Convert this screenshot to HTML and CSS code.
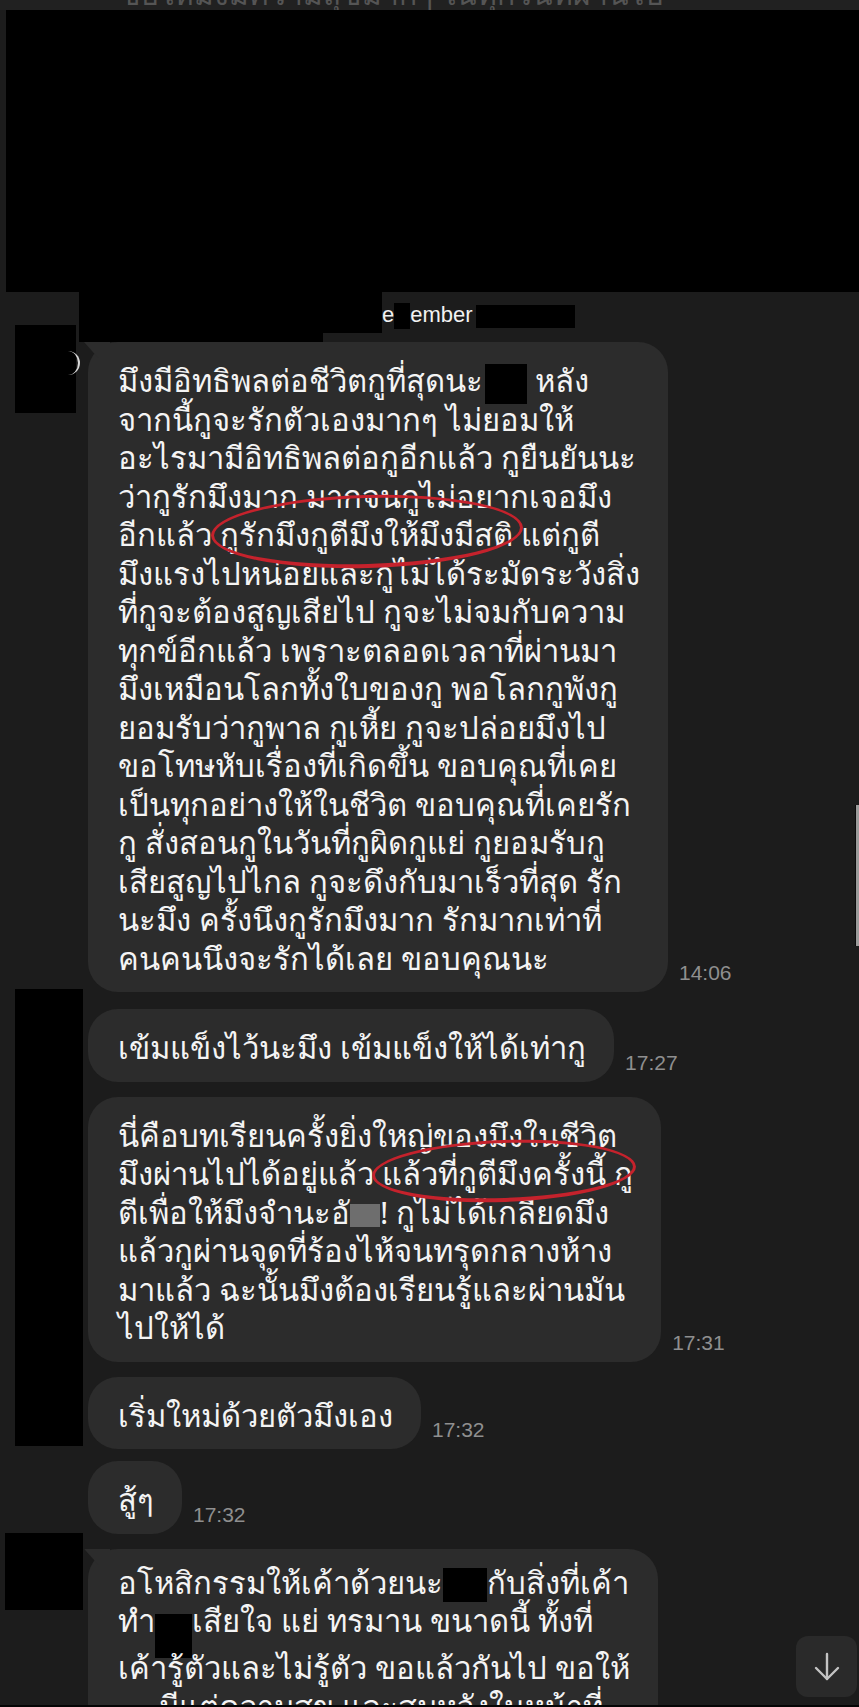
FILE: index.html
```html
<!DOCTYPE html>
<html lang="th">
<head>
    <meta charset="UTF-8">
    <meta name="viewport" content="width=device-width, initial-scale=1.0">
    <title>Chat</title>
    <link rel="stylesheet" href="styles.css">
</head>
<body>
    <div class="screen">
        <div class="prev-line"><span>ขอให้มึงมีความสุขมากๆ ในทุกวันที่ผ่านไป</span></div>
        <div class="top-cover"></div>

        <div class="date-row">
            <div class="blk blk-a"></div>
            <div class="blk blk-b"></div>
            <div class="date-text">
                <span class="hide">D</span>e<span class="hide hide-c">c</span>ember
            </div>
            <div class="blk blk-d"></div>
        </div>

        <div class="chat">
            <!-- avatar / name redactions -->
            <div class="blk avatar-1"><span class="ring"></span></div>
            <div class="blk avatar-col"></div>
            <div class="blk avatar-6"></div>

            <div class="msg row-1">
                <div class="bubble tail">มึงมีอิทธิพลต่อชีวิตกูที่สุดนะ<span class="hide-box box-1"></span> หลัง<br>จากนี้กูจะรักตัวเองมากๆ ไม่ยอมให้<br>อะไรมามีอิทธิพลต่อกูอีกแล้ว กูยืนยันนะ<br>ว่ากูรักมึงมาก มากจนกูไม่อยากเจอมึง<br>อีกแล้ว <span class="circled c1">กูรักมึงกูตีมึงให้มึงมีสติ</span> แต่กูตี<br>มึงแรงไปหน่อยและกูไม่ได้ระมัดระวังสิ่ง<br>ที่กูจะต้องสูญเสียไป กูจะไม่จมกับความ<br>ทุกข์อีกแล้ว เพราะตลอดเวลาที่ผ่านมา<br>มึงเหมือนโลกทั้งใบของกู พอโลกกูพังกู<br>ยอมรับว่ากูพาล กูเหี้ย กูจะปล่อยมึงไป<br>ขอโทษหับเรื่องที่เกิดขึ้น ขอบคุณที่เคย<br>เป็นทุกอย่างให้ในชีวิต ขอบคุณที่เคยรัก<br>กู สั่งสอนกูในวันที่กูผิดกูแย่ กูยอมรับกู<br>เสียสูญไปไกล กูจะดึงกับมาเร็วที่สุด รัก<br>นะมึง ครั้งนึงกูรักมึงมาก รักมากเท่าที่<br>คนคนนึงจะรักได้เลย ขอบคุณนะ</div>
                <span class="time">14:06</span>
            </div>

            <div class="msg row-2">
                <div class="bubble">เข้มแข็งไว้นะมึง เข้มแข็งให้ได้เท่ากู</div>
                <span class="time">17:27</span>
            </div>

            <div class="msg row-3">
                <div class="bubble">นี่คือบทเรียนครั้งยิ่งใหญ่ของมึงในชีวิต<br>มึงผ่านไปได้อยู่แล้ว <span class="circled c2">แล้วที่กูตีมึงครั้งนี้</span> กู<br>ตีเพื่อให้มึงจำนะอั<span class="blur-box"></span>! กูไม่ได้เกลียดมึง<br>แล้วกูผ่านจุดที่ร้องไห้จนทรุดกลางห้าง<br>มาแล้ว ฉะนั้นมึงต้องเรียนรู้และผ่านมัน<br>ไปให้ได้</div>
                <span class="time">17:31</span>
            </div>

            <div class="msg row-4">
                <div class="bubble">เริ่มใหม่ด้วยตัวมึงเอง</div>
                <span class="time">17:32</span>
            </div>

            <div class="msg row-5">
                <div class="bubble">สู้ๆ</div>
                <span class="time">17:32</span>
            </div>

            <div class="msg row-6">
                <div class="bubble tail b6">อโหสิกรรมให้เค้าด้วยนะ<span class="hide-box box-6a"></span>กับสิ่งที่เค้า<br>ทำ<span class="hide-box box-6b"></span>เสียใจ แย่ ทรมาน ขนาดนี้ ทั้งที่<br>เค้ารู้ตัวและไม่รู้ตัว ขอแล้วกันไป ขอให้<br><span class="hide-box box-6c"></span>มีแต่ความสุข และสมหวังในหน้าที่</div>
            </div>
        </div>

        <div class="scrollbar"></div>
        <button class="to-bottom" type="button">
            <svg width="30" height="30" viewBox="0 0 30 30" fill="none" stroke="#c4c4c4" stroke-width="2.4" stroke-linecap="round" stroke-linejoin="round">
                <line x1="15" y1="2" x2="15" y2="27"/>
                <polyline points="4,16 15,27 26,16"/>
            </svg>
        </button>
    </div>
    <div class="edge"></div>
</body>
</html>
```

FILE: styles.css
```css
body {
    margin: 0;
    padding: 0;
    width: 859px;
    height: 1707px;
    overflow: hidden;
    background: #1c1c1c;
    color: #f4f4f4;
    font-family: "Noto Sans", "DejaVu Sans", sans-serif;
}
.screen {
    position: relative;
    height: 1705px;
    overflow: hidden;
}
.edge {
    height: 2px;
    background: #050505;
}

/* previous message, cut off at the top */
.prev-line {
    height: 10px;
    overflow: hidden;
    background: #212121;
    padding-left: 120px;
}
.prev-line span {
    display: block;
    margin-top: -22px;
    font-size: 30px;
    line-height: 32px;
    color: #555;
    white-space: nowrap;
}
.top-cover {
    height: 282px;
    margin-left: 6px;
    background: #000;
}

.blk {
    background: #000;
}
.hide {
    background: #000;
    color: #000;
}

/* date separator */
.date-row {
    display: flex;
    align-items: flex-start;
    height: 50px;
}
.blk-a {
    margin-left: 79px;
    width: 244px;
    height: 50px;
}
.blk-b {
    position: relative;
    z-index: 1;
    width: 59px;
    height: 41px;
}
.date-text {
    margin: 10px 0 0 -16px;
    font-family: "Liberation Sans", Arial, sans-serif;
    font-size: 22px;
    line-height: 26px;
    color: #f2f2f2;
    white-space: nowrap;
}
.hide-c {
    display: inline-block;
    width: 16px;
    height: 26px;
    vertical-align: top;
    overflow: hidden;
    margin-top: 1px;
}
.blk-d {
    margin-top: 13px;
    margin-left: 3px;
    width: 99px;
    height: 23px;
}

/* messages */
.chat {
    display: grid;
    grid-template-columns: 88px 1fr;
    row-gap: 15px;
}
.msg {
    grid-column: 2;
    display: flex;
    align-items: flex-end;
}
.row-1 { grid-row: 1; }
.row-2 { grid-row: 2; margin-top: 2px; }
.row-3 { grid-row: 3; }
.row-4 { grid-row: 4; }
.row-5 { grid-row: 5; margin-top: -3px; }
.row-6 { grid-row: 6; }

.avatar-1 {
    grid-column: 1;
    grid-row: 1;
    align-self: start;
    position: relative;
    margin: -17px 0 0 15px;
    width: 61px;
    height: 88px;
}
.avatar-1 .ring {
    position: absolute;
    right: -4px;
    top: 26px;
    width: 12px;
    height: 24px;
    border-right: 2px solid #d8d8d8;
    border-radius: 0 12px 12px 0;
}
.avatar-col {
    grid-column: 1;
    grid-row: 2 / span 3;
    margin: -18px 5px 3px 15px;
}
.avatar-6 {
    grid-column: 1;
    grid-row: 6;
    align-self: start;
    margin: -16px 0 0 5px;
    width: 78px;
    height: 77px;
}

.bubble {
    position: relative;
    background: #2c2c2c;
    border-radius: 30px;
    padding: 19px 28px 15px 30px;
    font-size: 31px;
    line-height: 38.5px;
    white-space: nowrap;
}
.b6 {
    padding-top: 14px;
}
.tail::before {
    content: "";
    position: absolute;
    left: -4px;
    top: 0;
    width: 26px;
    height: 16px;
    background: #2c2c2c;
    clip-path: polygon(0 0, 100% 0, 100% 100%, 55% 100%);
}
.time {
    margin: 0 0 8px 11px;
    font-family: "Liberation Sans", Arial, sans-serif;
    font-size: 21px;
    line-height: 22px;
    color: #8f8f8f;
    white-space: nowrap;
}

/* redactions inside text */
.hide-box {
    display: inline-block;
    background: #000;
    vertical-align: middle;
}
.box-1 {
    width: 42px;
    height: 40px;
    margin: -4px 0 -4px 2px;
}
.box-6a {
    width: 44px;
    height: 34px;
    margin: -4px 0;
}
.box-6b {
    width: 37px;
    height: 44px;
    margin: -10px 0;
    vertical-align: -16px;
}
.box-6c {
    width: 53px;
    height: 26px;
    margin: -6px 0 -6px -12px;
    vertical-align: -14px;
}
.blur-box {
    display: inline-block;
    width: 30px;
    height: 23px;
    background: #6e6e6e;
    vertical-align: -3px;
}

/* red marker circles */
.circled {
    position: relative;
}
.circled::after {
    content: "";
    position: absolute;
    border: 3.5px solid #c5222c;
    border-bottom-width: 4.5px;
    border-radius: 50%;
}
.c1::after {
    left: -9px;
    right: -10px;
    top: -18px;
    bottom: -13px;
    transform: rotate(-1.5deg);
}
.c2::after {
    left: -10px;
    right: -30px;
    top: -12px;
    bottom: -8px;
    transform: rotate(-2deg);
}

/* overlays */
.scrollbar {
    position: absolute;
    right: 0;
    top: 805px;
    width: 3px;
    height: 141px;
    background: #9c9c9c;
    border-left: 1px solid #0c0c0c;
}
.to-bottom {
    position: absolute;
    left: 796px;
    top: 1636px;
    width: 61px;
    height: 61px;
    padding: 0;
    border: none;
    border-radius: 12px;
    background: #2a2a2a;
    display: flex;
    align-items: center;
    justify-content: center;
}
```
